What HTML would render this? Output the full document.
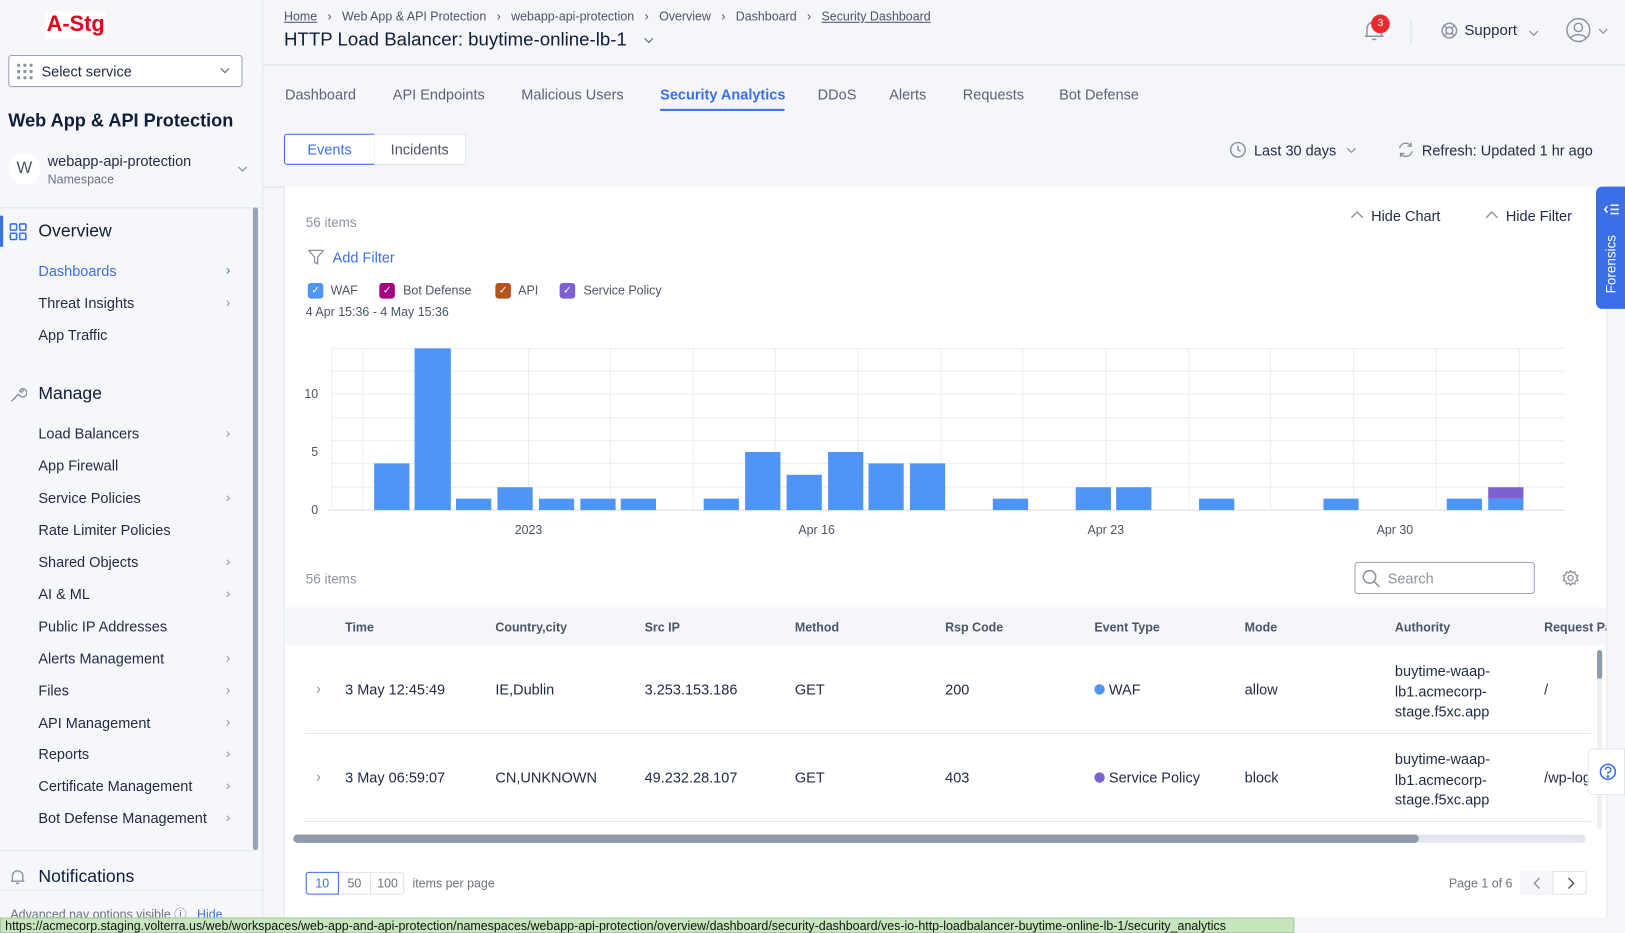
<!DOCTYPE html>
<html><head><meta charset="utf-8">
<style>
*{box-sizing:border-box;margin:0;padding:0}
html,body{width:1625px;height:933px;overflow:hidden;background:#f4f6f9}
body{font-family:"Liberation Sans",sans-serif;color:#1f2a44}
#w{position:absolute;left:0;top:0;width:1568px;height:900px;transform:scale(1.03635,1.0367);transform-origin:0 0;background:#f4f6f9}
.a{position:absolute;white-space:nowrap}
.sb{left:0;top:0;width:254px;height:900px;background:#f5f7fa;border-right:1px solid #e1e5ec}
.nav{font-size:14px;color:#1f2a44;left:37px}
.chev{font-size:13px;color:#8a93a3;left:218px}
.hd{font-size:12px;font-weight:bold;color:#4a5568;top:598px}
.cell{font-size:14px;color:#1f2a44}
.tab{font-size:14px;color:#5a6478;top:83px}
.cb{width:15px;height:15px;border-radius:3px;top:273px;color:#fff;font-size:10px;text-align:center;line-height:15px}
.lg{font-size:12px;color:#4a5568;top:273px}
</style></head><body><div id="w">

<div class="a sb"></div>
<div class="a" style="left:44px;top:11px;background:#fff;padding:0 1px;color:#e3001b;font-weight:bold;font-size:21px;line-height:26px">A-Stg</div>
<div class="a" style="left:8px;top:53px;width:226px;height:31px;border:1px solid #9aa3b1;border-radius:3px;background:#fff"></div>
<svg class="a" style="left:16px;top:61px" width="16" height="16"><g fill="#8a93a3"><circle cx="2" cy="2" r="1.6"/><circle cx="8" cy="2" r="1.6"/><circle cx="14" cy="2" r="1.6"/><circle cx="2" cy="8" r="1.6"/><circle cx="8" cy="8" r="1.6"/><circle cx="14" cy="8" r="1.6"/><circle cx="2" cy="14" r="1.6"/><circle cx="8" cy="14" r="1.6"/><circle cx="14" cy="14" r="1.6"/></g></svg>
<div class="a" style="left:40px;top:61px;font-size:14px">Select service</div>
<svg class="a" style="left:212px;top:65px" width="10" height="6" fill="none" stroke="#6b7280" stroke-width="1.2"><path d="M1 1 L5 5 L9 1"/></svg>
<div class="a" style="left:8px;top:106px;font-size:17.5px;font-weight:bold;color:#0f1d3a">Web App &amp; API Protection</div>
<div class="a" style="left:8px;top:147px;width:31px;height:31px;border-radius:50%;background:#fff;text-align:center;line-height:31px;font-size:16px;color:#4a5568">W</div>
<div class="a" style="left:46px;top:147px;font-size:14px">webapp-api-protection</div>
<div class="a" style="left:46px;top:166px;font-size:12px;color:#6b7280">Namespace</div>
<svg class="a" style="left:229px;top:160px" width="10" height="6" fill="none" stroke="#8a93a3" stroke-width="1.2"><path d="M1 1 L5 5 L9 1"/></svg>
<div class="a" style="left:0;top:200px;width:254px;height:1px;background:#e1e5ec"></div>
<div class="a" style="left:244px;top:200px;width:5px;height:620px;background:#9aa3b1;border-radius:3px"></div>
<div class="a" style="left:0;top:208px;width:3px;height:30px;background:#3b6fe8"></div>
<svg class="a" style="left:9px;top:215px" width="17" height="17" fill="none" stroke="#3b6fe8" stroke-width="1.5"><rect x="1" y="1" width="6" height="6" rx="1"/><rect x="10" y="1" width="6" height="6" rx="1"/><rect x="1" y="10" width="6" height="6" rx="1"/><rect x="10" y="10" width="6" height="6" rx="1"/></svg>
<div class="a" style="left:37px;top:213px;font-size:17px;color:#0f1d3a">Overview</div>
<div class="a nav" style="top:253px;color:#3b6fe8">Dashboards</div><div class="a chev" style="top:253px;color:#3b6fe8">&#8250;</div>
<div class="a nav" style="top:284px">Threat Insights</div><div class="a chev" style="top:284px">&#8250;</div>
<div class="a nav" style="top:315px">App Traffic</div>
<svg class="a" style="left:9px;top:372px" width="17" height="17" fill="none" stroke="#8a93a3" stroke-width="1.4"><path d="M2 15 L9 8 M9 8 A4 4 0 1 0 12 3 L10 5 L11.5 6.5 L14 4"/></svg>
<div class="a" style="left:37px;top:370px;font-size:17px;color:#0f1d3a">Manage</div>
<div class="a nav" style="top:410px">Load Balancers</div><div class="a chev" style="top:410px">&#8250;</div>
<div class="a nav" style="top:441px">App Firewall</div>
<div class="a nav" style="top:472px">Service Policies</div><div class="a chev" style="top:472px">&#8250;</div>
<div class="a nav" style="top:503px">Rate Limiter Policies</div>
<div class="a nav" style="top:534px">Shared Objects</div><div class="a chev" style="top:534px">&#8250;</div>
<div class="a nav" style="top:565px">AI &amp; ML</div><div class="a chev" style="top:565px">&#8250;</div>
<div class="a nav" style="top:596px">Public IP Addresses</div>
<div class="a nav" style="top:627px">Alerts Management</div><div class="a chev" style="top:627px">&#8250;</div>
<div class="a nav" style="top:658px">Files</div><div class="a chev" style="top:658px">&#8250;</div>
<div class="a nav" style="top:689px">API Management</div><div class="a chev" style="top:689px">&#8250;</div>
<div class="a nav" style="top:719px">Reports</div><div class="a chev" style="top:719px">&#8250;</div>
<div class="a nav" style="top:750px">Certificate Management</div><div class="a chev" style="top:750px">&#8250;</div>
<div class="a nav" style="top:781px">Bot Defense Management</div><div class="a chev" style="top:781px">&#8250;</div>
<div class="a" style="left:0;top:820px;width:244px;height:1px;background:#e1e5ec"></div>
<svg class="a" style="left:9px;top:838px" width="16" height="16" fill="none" stroke="#8a93a3" stroke-width="1.3"><path d="M3 12 L3 7 A5 5 0 0 1 13 7 L13 12 Z M1.5 12 H14.5 M6.5 14 H9.5"/></svg>
<div class="a" style="left:37px;top:836px;font-size:17px;color:#0f1d3a">Notifications</div>
<div class="a" style="left:0;top:858px;width:254px;height:1px;background:#e1e5ec"></div>
<div class="a" style="left:10px;top:873px;font-size:12px;color:#6b7280">Advanced nav options visible ⓘ&nbsp;&nbsp;&nbsp;<span style="color:#3b6fe8">Hide</span></div>

<!-- header -->
<div class="a" style="left:274px;top:9px;font-size:12px;color:#4a5568"><u>Home</u>&nbsp;&nbsp; &#8250; &nbsp;&nbsp;Web App &amp; API Protection&nbsp;&nbsp; &#8250; &nbsp;&nbsp;webapp-api-protection&nbsp;&nbsp; &#8250; &nbsp;&nbsp;Overview&nbsp;&nbsp; &#8250; &nbsp;&nbsp;Dashboard&nbsp;&nbsp; &#8250; &nbsp;&nbsp;<u>Security Dashboard</u></div>
<div class="a" style="left:274px;top:28px;font-size:18px;color:#0f1d3a">HTTP Load Balancer: buytime-online-lb-1</div>
<svg class="a" style="left:621px;top:36px" width="10" height="6" fill="none" stroke="#6b7280" stroke-width="1.2"><path d="M1 1 L5 5 L9 1"/></svg>
<div class="a" style="left:254px;top:62px;width:1314px;height:1px;background:#dde2ea"></div>
<svg class="a" style="left:1314px;top:17px" width="24" height="24" fill="none" stroke="#8a93a3" stroke-width="1.4"><path d="M5 18 L5 11 A7 7 0 0 1 19 11 L19 18 Z M3 18 H21 M10 21 H14"/></svg>
<div class="a" style="left:1323px;top:14px;width:18px;height:18px;border-radius:50%;background:#f0282d;color:#fff;font-size:10px;text-align:center;line-height:18px">3</div>
<div class="a" style="left:1361px;top:19px;width:1px;height:24px;background:#dde2ea"></div>
<svg class="a" style="left:1390px;top:21px" width="17" height="17" fill="none" stroke="#8a93a3" stroke-width="1.4"><circle cx="8.5" cy="8.5" r="7"/><circle cx="8.5" cy="8.5" r="3.2"/><path d="M3.5 3.5 L6 6 M13.5 3.5 L11 6 M3.5 13.5 L6 11 M13.5 13.5 L11 11"/></svg>
<div class="a" style="left:1413px;top:22px;font-size:14.5px;color:#1f2a44">Support</div>
<svg class="a" style="left:1475px;top:29px" width="10" height="6" fill="none" stroke="#8a93a3" stroke-width="1.2"><path d="M1 1 L5 5 L9 1"/></svg>
<svg class="a" style="left:1511px;top:17px" width="24" height="24" fill="none" stroke="#8a93a3" stroke-width="1.4"><circle cx="12" cy="12" r="11"/><circle cx="12" cy="9.5" r="4"/><path d="M5 19.5 C7 15.5 17 15.5 19 19.5"/></svg>
<svg class="a" style="left:1542px;top:27px" width="10" height="6" fill="none" stroke="#8a93a3" stroke-width="1.2"><path d="M1 1 L5 5 L9 1"/></svg>

<!-- tabs -->
<div class="a tab" style="left:275px">Dashboard</div>
<div class="a tab" style="left:379px">API Endpoints</div>
<div class="a tab" style="left:503px">Malicious Users</div>
<div class="a tab" style="left:637px;color:#3b6fe8;font-weight:bold">Security Analytics</div>
<div class="a" style="left:637px;top:105px;width:120px;height:2px;background:#3b6fe8"></div>
<div class="a tab" style="left:789px">DDoS</div>
<div class="a tab" style="left:858px">Alerts</div>
<div class="a tab" style="left:929px">Requests</div>
<div class="a tab" style="left:1022px">Bot Defense</div>

<div class="a" style="left:274px;top:129px;width:88px;height:30px;border:1px solid #3b6fe8;border-radius:3px 0 0 3px;background:#fff;color:#3b6fe8;font-size:14px;text-align:center;line-height:28px">Events</div>
<div class="a" style="left:361px;top:129px;width:89px;height:30px;border:1px solid #dde2ea;border-left:none;border-radius:0 3px 3px 0;background:#fff;color:#4a5568;font-size:14px;text-align:center;line-height:28px">Incidents</div>
<svg class="a" style="left:1186px;top:136px" width="17" height="17" fill="none" stroke="#8a93a3" stroke-width="1.4"><circle cx="8.5" cy="8.5" r="7"/><path d="M8.5 4.5 V8.5 L11 10"/></svg>
<div class="a" style="left:1210px;top:137px;font-size:14px">Last 30 days</div>
<svg class="a" style="left:1299px;top:142px" width="10" height="6" fill="none" stroke="#8a93a3" stroke-width="1.2"><path d="M1 1 L5 5 L9 1"/></svg>
<svg class="a" style="left:1348px;top:136px" width="17" height="17" fill="none" stroke="#8a93a3" stroke-width="1.4"><path d="M2.5 7 A6 6 0 0 1 13.5 5 M13.5 1.5 V5 H10 M14.5 10 A6 6 0 0 1 3.5 12 M3.5 15.5 V12 H7"/></svg>
<div class="a" style="left:1372px;top:137px;font-size:14px">Refresh: Updated 1 hr ago</div>

<!-- panel -->
<div class="a" style="left:254px;top:180px;width:1314px;height:1px;background:#dde2ea"></div>
<div class="a" style="left:274px;top:180px;width:1277px;height:705px;background:#fff;border-left:1px solid #e6e9ef;border-right:1px solid #e6e9ef"></div>
<div class="a" style="left:1540px;top:180px;width:28px;height:118px;background:#3b6fe8;border-radius:6px 0 0 6px"></div>
<svg class="a" style="left:1547px;top:196px" width="16" height="12" fill="none" stroke="#fff" stroke-width="1.5"><path d="M4 3 L1.5 6 L4 9 M7 2 H15 M7 6 H15 M7 10 H15"/></svg>
<div class="a" style="left:1547px;top:283px;color:#fff;font-size:13px;transform:rotate(-90deg);transform-origin:0 0">Forensics</div>

<div class="a" style="left:295px;top:207px;font-size:13px;color:#8a93a3">56 items</div>
<svg class="a" style="left:1303px;top:203px" width="13" height="8" fill="none" stroke="#8a93a3" stroke-width="1.4"><path d="M1 7 L6.5 1.5 L12 7"/></svg>
<div class="a" style="left:1323px;top:200px;font-size:14px">Hide Chart</div>
<svg class="a" style="left:1433px;top:203px" width="13" height="8" fill="none" stroke="#8a93a3" stroke-width="1.4"><path d="M1 7 L6.5 1.5 L12 7"/></svg>
<div class="a" style="left:1453px;top:200px;font-size:14px">Hide Filter</div>
<svg class="a" style="left:297px;top:240px" width="16" height="16" fill="none" stroke="#8a93a3" stroke-width="1.3"><path d="M1 1.5 H15 L9.5 8 V14.5 L6.5 13 V8 Z"/></svg>
<div class="a" style="left:321px;top:240px;font-size:14px;color:#3b6fe8">Add Filter</div>
<div class="a cb" style="left:297px;background:#4f95f7">&#10003;</div><div class="a lg" style="left:319px">WAF</div>
<div class="a cb" style="left:366px;background:#a3007f">&#10003;</div><div class="a lg" style="left:389px">Bot Defense</div>
<div class="a cb" style="left:478px;background:#b5521c">&#10003;</div><div class="a lg" style="left:500px">API</div>
<div class="a cb" style="left:540px;background:#7c62d1">&#10003;</div><div class="a lg" style="left:563px">Service Policy</div>
<div class="a" style="left:295px;top:294px;font-size:12px;color:#4a5568">4 Apr 15:36 - 4 May 15:36</div>

<svg class="a" style="left:0;top:0" width="1568" height="530" font-family="Liberation Sans" font-size="12" fill="#4a5568">
<g stroke="#eceef2" stroke-width="1">
<line x1="320" y1="336" x2="1510" y2="336"/><line x1="320" y1="358" x2="1510" y2="358"/><line x1="320" y1="380" x2="1510" y2="380"/><line x1="320" y1="403" x2="1510" y2="403"/><line x1="320" y1="425" x2="1510" y2="425"/><line x1="320" y1="447" x2="1510" y2="447"/><line x1="320" y1="470" x2="1510" y2="470"/>
<line x1="320" y1="336" x2="320" y2="492"/><line x1="350" y1="336" x2="350" y2="492"/><line x1="430" y1="336" x2="430" y2="492"/><line x1="510" y1="336" x2="510" y2="492"/><line x1="589" y1="336" x2="589" y2="492"/><line x1="669" y1="336" x2="669" y2="492"/><line x1="748" y1="336" x2="748" y2="492"/><line x1="828" y1="336" x2="828" y2="492"/><line x1="908" y1="336" x2="908" y2="492"/><line x1="987" y1="336" x2="987" y2="492"/><line x1="1067" y1="336" x2="1067" y2="492"/><line x1="1147" y1="336" x2="1147" y2="492"/><line x1="1226" y1="336" x2="1226" y2="492"/><line x1="1306" y1="336" x2="1306" y2="492"/><line x1="1386" y1="336" x2="1386" y2="492"/><line x1="1466" y1="336" x2="1466" y2="492"/>
</g>
<line x1="316" y1="492" x2="1510" y2="492" stroke="#dcdfe5"/>
<g fill="#4f95f7">
<rect x="361" y="447" width="34" height="45"/><rect x="400" y="336" width="35" height="156"/><rect x="440" y="481" width="34" height="11"/><rect x="480" y="470" width="34" height="22"/><rect x="520" y="481" width="34" height="11"/><rect x="560" y="481" width="34" height="11"/><rect x="599" y="481" width="34" height="11"/>
<rect x="679" y="481" width="34" height="11"/><rect x="719" y="436" width="34" height="56"/><rect x="759" y="458" width="34" height="34"/><rect x="799" y="436" width="34" height="56"/><rect x="838" y="447" width="34" height="45"/><rect x="878" y="447" width="34" height="45"/>
<rect x="958" y="481" width="34" height="11"/><rect x="1038" y="470" width="34" height="22"/><rect x="1077" y="470" width="34" height="22"/><rect x="1157" y="481" width="34" height="11"/><rect x="1277" y="481" width="34" height="11"/><rect x="1396" y="481" width="34" height="11"/><rect x="1436" y="481" width="34" height="11"/>
</g>
<rect x="1436" y="470" width="34" height="11" fill="#7c62d1"/>
<text x="307" y="384" text-anchor="end">10</text><text x="307" y="440" text-anchor="end">5</text><text x="307" y="496" text-anchor="end">0</text>
<text x="510" y="515" text-anchor="middle">2023</text><text x="788" y="515" text-anchor="middle">Apr 16</text><text x="1067" y="515" text-anchor="middle">Apr 23</text><text x="1346" y="515" text-anchor="middle">Apr 30</text>
</svg>

<!-- table -->
<div class="a" style="left:295px;top:551px;font-size:13px;color:#8a93a3">56 items</div>
<div class="a" style="left:1307px;top:542px;width:174px;height:31px;border:1px solid #9aa3b1;border-radius:3px;background:#fff"></div>
<svg class="a" style="left:1314px;top:549px" width="18" height="18" fill="none" stroke="#8a93a3" stroke-width="1.5"><circle cx="7.5" cy="7.5" r="6"/><path d="M12 12 L17 17"/></svg>
<div class="a" style="left:1339px;top:550px;font-size:14px;color:#8a93a3">Search</div>
<svg class="a" style="left:1507px;top:549px" width="17" height="17" fill="none" stroke="#8a93a3" stroke-width="1.3"><circle cx="8.5" cy="8.5" r="2.5"/><path d="M8.5 1.5 L10 3.5 L12.5 2.7 L13 5.3 L15.5 6.2 L14.3 8.5 L15.5 10.8 L13 11.7 L12.5 14.3 L10 13.5 L8.5 15.5 L7 13.5 L4.5 14.3 L4 11.7 L1.5 10.8 L2.7 8.5 L1.5 6.2 L4 5.3 L4.5 2.7 L7 3.5 Z"/></svg>
<div class="a" style="left:276px;top:586px;width:1274px;height:36px;background:#f4f6f9"></div>
<div class="a hd" style="left:333px">Time</div><div class="a hd" style="left:478px">Country,city</div><div class="a hd" style="left:622px">Src IP</div><div class="a hd" style="left:767px">Method</div><div class="a hd" style="left:912px">Rsp Code</div><div class="a hd" style="left:1056px">Event Type</div><div class="a hd" style="left:1201px">Mode</div><div class="a hd" style="left:1346px">Authority</div><div class="a hd" style="left:1490px;width:60px;overflow:hidden">Request Pa</div>

<div class="a" style="left:305px;top:656px;font-size:14px;color:#8a93a3">&#8250;</div>
<div class="a cell" style="left:333px;top:657px">3 May 12:45:49</div><div class="a cell" style="left:478px;top:657px">IE,Dublin</div><div class="a cell" style="left:622px;top:657px">3.253.153.186</div><div class="a cell" style="left:767px;top:657px">GET</div><div class="a cell" style="left:912px;top:657px">200</div>
<div class="a" style="left:1056px;top:660px;width:10px;height:10px;border-radius:50%;background:#4f95f7"></div><div class="a cell" style="left:1070px;top:657px">WAF</div>
<div class="a cell" style="left:1201px;top:657px">allow</div>
<div class="a cell" style="left:1346px;top:638px;line-height:19.5px">buytime-waap-<br>lb1.acmecorp-<br>stage.f5xc.app</div>
<div class="a cell" style="left:1490px;top:657px">/</div>
<div class="a" style="left:294px;top:707px;width:1241px;height:1px;background:#e1e5ec"></div>

<div class="a" style="left:305px;top:741px;font-size:14px;color:#8a93a3">&#8250;</div>
<div class="a cell" style="left:333px;top:742px">3 May 06:59:07</div><div class="a cell" style="left:478px;top:742px">CN,UNKNOWN</div><div class="a cell" style="left:622px;top:742px">49.232.28.107</div><div class="a cell" style="left:767px;top:742px">GET</div><div class="a cell" style="left:912px;top:742px">403</div>
<div class="a" style="left:1056px;top:745px;width:10px;height:10px;border-radius:50%;background:#7c62d1"></div><div class="a cell" style="left:1070px;top:742px">Service Policy</div>
<div class="a cell" style="left:1201px;top:742px">block</div>
<div class="a cell" style="left:1346px;top:723px;line-height:19.5px">buytime-waap-<br>lb1.acmecorp-<br>stage.f5xc.app</div>
<div class="a cell" style="left:1490px;top:742px;width:42px;overflow:hidden">/wp-login</div>
<div class="a" style="left:294px;top:792px;width:1241px;height:1px;background:#e1e5ec"></div>
<div class="a" style="left:1541px;top:627px;width:5px;height:173px;background:#eef0f4;border-radius:3px"></div>
<div class="a" style="left:1541px;top:627px;width:5px;height:28px;background:#8f9aab;border-radius:3px"></div>
<div class="a" style="left:1532px;top:722px;width:36px;height:45px;background:#fff;border:1px solid #e1e5ec;border-radius:5px 0 0 5px"></div>
<svg class="a" style="left:1543px;top:736px" width="17" height="17" fill="none" stroke="#3b6fe8" stroke-width="1.5"><circle cx="8.5" cy="8.5" r="7.2"/><path d="M6 6.5 A2.6 2.6 0 1 1 8.5 9.3 V10.5"/><circle cx="8.5" cy="13" r=".6" fill="#3b6fe8"/></svg>

<div class="a" style="left:283px;top:805px;width:1247px;height:8px;background:#e2e6ee;border-radius:4px"></div>
<div class="a" style="left:283px;top:805px;width:1086px;height:8px;background:#8f9aab;border-radius:4px"></div>

<div class="a" style="left:295px;top:841px;width:95px;height:22px;border:1px solid #dde2ea;border-radius:3px"></div>
<div class="a" style="left:295px;top:841px;width:32px;height:22px;border:1px solid #3b6fe8;border-radius:3px 0 0 3px;color:#3b6fe8;font-size:12px;text-align:center;line-height:20px">10</div>
<div class="a" style="left:327px;top:841px;width:31px;height:22px;border-right:1px solid #dde2ea;color:#6b7280;font-size:12px;text-align:center;line-height:22px">50</div>
<div class="a" style="left:358px;top:841px;width:32px;height:22px;color:#6b7280;font-size:12px;text-align:center;line-height:22px">100</div>
<div class="a" style="left:398px;top:845px;font-size:12px;color:#6b7280">items per page</div>
<div class="a" style="left:1398px;top:845px;font-size:12px;color:#6b7280">Page 1 of 6</div>
<div class="a" style="left:1467px;top:840px;width:64px;height:23px;border:1px solid #dde2ea;border-radius:3px"></div>
<div class="a" style="left:1467px;top:840px;width:32px;height:23px;background:#f4f6f9;border-right:1px solid #dde2ea"></div>
<svg class="a" style="left:1479px;top:846px" width="8" height="12" fill="none" stroke="#8a93a3" stroke-width="1.4"><path d="M6.5 1 L1.5 6 L6.5 11"/></svg>
<svg class="a" style="left:1512px;top:846px" width="8" height="12" fill="none" stroke="#4a5568" stroke-width="1.4"><path d="M1.5 1 L6.5 6 L1.5 11"/></svg>

<div class="a" style="left:0;top:885px;width:1249px;height:15px;background:#c6e6be;border:1px solid #a8c9a0;font-size:12px;line-height:14px;padding-left:4px;color:#111">https://acmecorp.staging.volterra.us/web/workspaces/web-app-and-api-protection/namespaces/webapp-api-protection/overview/dashboard/security-dashboard/ves-io-http-loadbalancer-buytime-online-lb-1/security_analytics</div>
</div></body></html>
